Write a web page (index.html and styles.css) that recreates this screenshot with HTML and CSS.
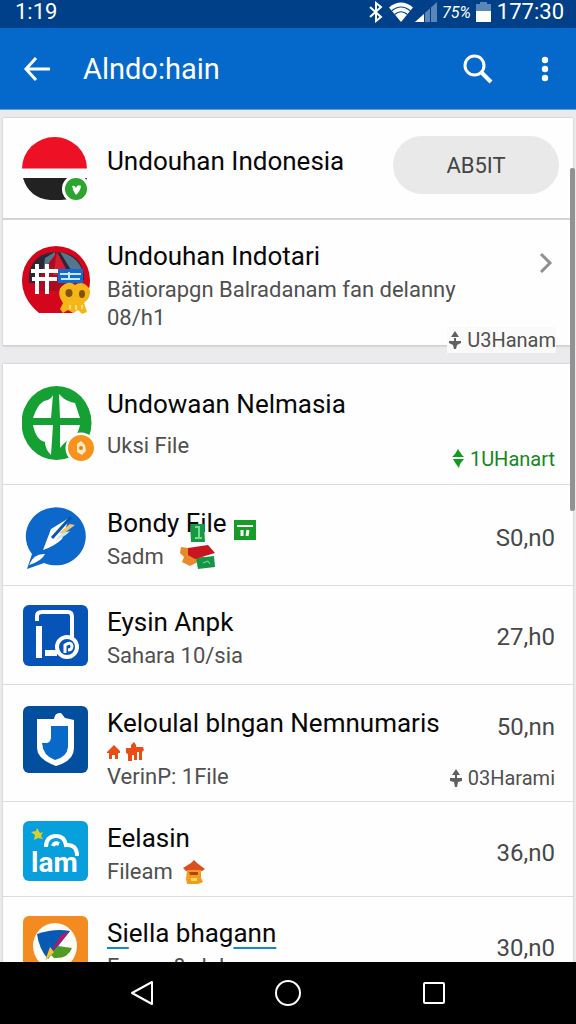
FILE: index.html
```html
<!doctype html>
<html lang="id">
<head>
<meta charset="utf-8">
<meta name="viewport" content="width=device-width, initial-scale=1">
<title>Alndo:hain</title>
<link rel="stylesheet" href="styles.css">
</head>
<body>
    <div class="status-bar">
        <span class="clock">1:19</span>
        <div class="status-icons">
            <svg width="14" height="22" viewBox="0 0 14 22"><path d="M1 6l11 10-5 4V2l5 4L1 16" fill="none" stroke="#fff" stroke-width="2"/></svg>
            <svg class="wifi" width="24" height="20" viewBox="0 0 24 20"><path d="M0 5.500Q12-4.500 24 5.500L12 20z" fill="#fff"/><path d="M2.500 9Q12 1 21.500 9M5.500 12.500Q12 7 18.500 12.500" fill="none" stroke="#004088" stroke-width="1.200"/></svg>
            <svg width="22" height="20" viewBox="0 0 22 20"><path d="M0 20L22 0v20z" fill="#5b86b8"/><path d="M0 20L9 12v8z" fill="#fff"/><path d="M9.500 8v12M15.500 4v16" stroke="#004088"/></svg>
            <span class="percent">75%</span>
            <svg class="battery" width="15" height="20" viewBox="0 0 15 20"><path d="M4 0h7v2h4v7H0V2h4z" fill="#5b86b8"/><path d="M0 9h15v11H0z" fill="#fff"/></svg>
            <span class="clock">177:30</span>
        </div>
    </div>

    <header class="app-bar">
        <button type="button" class="icon-button" aria-label="Kembali">
            <svg width="28" height="26" viewBox="0 0 28 26"><path d="M13 2L3 13l10 11M3 13h24" fill="none" stroke="#fff" stroke-width="3"/></svg>
        </button>
        <h1>Alndo:hain</h1>
        <button type="button" class="icon-button search" aria-label="Cari">
            <svg width="30" height="30" viewBox="0 0 30 30"><circle cx="11.500" cy="11.500" r="9.500" fill="none" stroke="#fff" stroke-width="3"/><path d="M18 18l10 10" stroke="#fff" stroke-width="4"/></svg>
        </button>
        <button type="button" class="icon-button" aria-label="Menu">
            <svg width="8" height="26" viewBox="0 0 8 26" fill="#fff"><circle cx="4" cy="4" r="3.200"/><circle cx="4" cy="13" r="3.200"/><circle cx="4" cy="22" r="3.200"/></svg>
        </button>
    </header>

    <main>
        <ul class="card">
            <li class="row row-lead">
                <svg class="icon" width="68" height="66" viewBox="0 0 68 66">
                    <path d="M0 32.500a32.500 31.500 0 0 1 65 0z" fill="#ee1024"/>
                    <path d="M1 42h64q-5 21-26 22H28Q7 62 1 42z" fill="#222"/>
                    <circle cx="54" cy="53" r="14" fill="#fff"/><circle cx="54" cy="53" r="11" fill="#2ba52b"/>
                    <path d="M50 50q3-1 4 2 1-4 5-2-1 6-5 9-3-4-4-9z" fill="#fff"/>
                </svg>
                <div class="text"><h2>Undouhan Indonesia</h2></div>
                <button type="button" class="pill">AB5IT</button>
            </li>
            <li class="row row-detail">
                <svg class="icon" width="68" height="70" viewBox="0 0 68 70">
                    <path d="M17 68Q0 54 0 35a34 34 0 0 1 68 0q0 20-17 33z" fill="#d3061b"/>
                    <path d="M7 38Q5 9 34 7q28 1 28 28L47 40z" fill="#2d2735"/>
                    <path d="M23 13l10-6 1 12-13 9zM38 7q18 4 23 20l-12-2z" fill="#53788d"/>
                    <path d="M35 7L18 30v16h38L40 16z" fill="#a90d22"/><path d="M35 7l-4 23h16z" fill="#d51c31"/>
                    <path d="M9 26h27M10 34h25M15 19v30M25 19v30" stroke="#fff" stroke-width="4"/>
                    <path d="M36 24h25v14H36z" fill="#126ad0"/><path d="M38 29h21M39 34h19M47 27v8" stroke="#c9e6ff" stroke-width="2"/>
                    <path d="M38 53q-3-10 5-14 6-3 10 1 6-4 11 0 7 5 2 14l-4 4 3 9-5 2-4-4-5 3-5-3-5 3-3-4 3-6z" fill="#f6b619"/>
                    <ellipse cx="47" cy="48" rx="3.500" ry="4" fill="#84510a"/><ellipse cx="60" cy="49" rx="3" ry="4" fill="#84510a"/>
                    <path d="M48 60v4M54 60v5M60 60v4" stroke="#ffe278" stroke-width="2"/>
                </svg>
                <div class="text">
                    <h2>Undouhan Indotari</h2>
                    <p>Bätiorapgn Balradanam fan delanny<br>08/h1</p>
                </div>
                <a href="#" class="more" aria-label="Buka"><svg width="14" height="22" viewBox="0 0 14 22"><path d="M2 2l9 9-9 9" fill="none" stroke="#909090" stroke-width="3"/></svg></a>
                <span class="meta meta-edge"><svg width="12" height="20" viewBox="0 0 12 20"><path d="M6 1l4 6H2zM5 8h2v3h5v2l-4 2-1 4H5l-1-4-4-2v-2h5z"/></svg>U3Hanam</span>
            </li>
        </ul>

        <ul class="card">
            <li class="row row-spaced">
                <svg class="icon" width="72" height="76" viewBox="0 0 72 76">
                    <ellipse cx="34.500" cy="37" rx="35" ry="37" fill="#15a033"/>
                    <path d="M11 32q4-13 11-17 7-1 9-6l-2 23zM37 8q7 8 16 9l5 15H38zM11 39h20l-2 30q-6-6-6-13-9-2-12-17zM38 39h20q-2 10-8 14-6 1-12 9z" fill="#fff"/>
                    <circle cx="59" cy="62" r="15.500" fill="#fff"/><circle cx="59" cy="62" r="13" fill="#f7931d"/>
                    <path d="M55 58l4-3 4 4 1 6-4 4-5-3z" fill="#ffe8bd"/><circle cx="59" cy="62" r="2" fill="#d2852a"/>
                </svg>
                <div class="text"><h2>Undowaan Nelmasia</h2><p>Uksi File</p></div>
                <span class="meta meta-new"><svg width="12" height="20" viewBox="0 0 12 20"><path d="M6 0l4 6 2 2H0l3-3zM1 10h11l-4 5-1 4-3-4z"/></svg>1UHanart</span>
            </li>
            <li class="row row-tall">
                <svg class="icon" width="66" height="64" viewBox="0 0 66 64">
                    <path d="M5 64l5-15a30 29 0 1 1 12 9z" fill="#0d68cc"/>
                    <path d="M47 13L29 24 21 45q12-4 19-11zM7 60q5-12 16-11-3 7-16 11z" fill="#fff"/>
                    <path d="M49 12L30 33" stroke="#0d55ad" stroke-width="3"/><path d="M53 20l-12 9-4-1 11-9z" fill="#f6c36b"/><path d="M34 35q4-8 14-9-5 6-14 9z" fill="#c9e7f8"/>
                </svg>
                <div class="text">
                    <h2>Bondy <span class="chip"><span>F</span><svg width="15" height="20" viewBox="0 0 15 20"><path d="M0 2h14l1 18H1z" fill="#159a43"/><path d="M5 5h4v10M5 16h7" fill="none" stroke="#72dc91" stroke-width="2"/></svg></span>ile<svg class="badge" width="22" height="20" viewBox="0 0 22 20"><path d="M0 0h22v20H0z" fill="#189c28"/><path d="M3 6h16" stroke="#fff" stroke-width="2"/><path d="M8 10v6M14 10l-1 6" fill="none" stroke="#fff" stroke-width="3"/></svg></h2>
                    <p>Sadm<svg class="ticket" width="36" height="24" viewBox="0 0 36 24"><path d="M1 2l7 1 18 10-16 8-8-4 2-5-4-4z" fill="#e8892b"/><path d="M16 13l18-2 1 11-17 2z" fill="#159546"/><path d="M8 3l20-3 7 8-20 6-7-4z" fill="#c8151e"/><path d="M23 18l5-2 2 3" stroke="#83dda6" fill="none"/></svg></p>
                </div>
                <span class="price">S0,n0</span>
            </li>
            <li class="row">
                <svg class="icon" width="66" height="62" viewBox="0 0 66 62">
                    <rect x="1" y="1" width="65" height="61" rx="6" fill="#0754b8"/>
                    <path d="M15 17v-5q0-4 5-4h26q4 0 4 5v22" fill="none" stroke="#fff" stroke-width="4"/>
                    <path d="M17 22v32M23 49h12" stroke="#fff" stroke-width="6"/>
                    <circle cx="45" cy="43" r="10" fill="#0754b8" stroke="#fff" stroke-width="4"/>
                    <path d="M43 49v-8q6-4 7 1 0 4-4 4" fill="none" stroke="#fff" stroke-width="3"/>
                </svg>
                <div class="text"><h2>Eysin Anpk</h2><p>Sahara 10/sia</p></div>
                <span class="price">27,h0</span>
            </li>
            <li class="row row-stats">
                <svg class="icon" width="66" height="68" viewBox="0 0 66 68">
                    <rect x="1" y="1" width="65" height="67" rx="6" fill="#034f9f"/>
                    <path d="M15 14h17q1-7 7-6l4 5 9 2v28q0 13-18 18-19-7-19-18z" fill="#fff"/>
                    <path d="M29 21h17v21q-1 10-13 13-12-4-13-17h5q4-1 4-6z" fill="#0869c8"/>
                </svg>
                <div class="text">
                    <h2>Keloulal blngan Nemnumaris</h2>
                    <svg class="houses" width="38" height="20" viewBox="0 0 38 20"><path d="M0 11l7-7 6 6v2h-2v6H8v-4H5v4H2v-6H0zM19 7h5V4l3-3 2 3v2h7l1 3-2 2v8h-3v-8h-2v8h-3v-5h-2v6h-4v-7l-2-1z" fill="#ed4b16"/></svg>
                    <p>VerinP: 1File</p>
                </div>
                <div class="side"><span class="price">50,nn</span><span class="meta"><svg width="12" height="20" viewBox="0 0 12 20"><path d="M6 1l4 6H2zM5 7h2v3h5v3l-4 1-1 5H5l-1-5-4-1v-3h5z"/></svg>03Harami</span></div>
            </li>
            <li class="row row-short">
                <svg class="icon" width="66" height="62" viewBox="0 0 66 62">
                    <rect x="1" y="1" width="65" height="60" rx="6" fill="#079fdc"/>
                    <path d="M15 8l3 5 3-1-2 4 2 3-5-1-4 2 1-5-4-3 5-1z" fill="#d6d22c"/>
                    <path d="M24 27q0-10 9-11 9-1 11 9 11-1 11 11M31 26q1-4 6-2" fill="none" stroke="#fff" stroke-width="4"/>
                    <text x="9" y="52" class="logo-text">lam</text>
                </svg>
                <div class="text"><h2>Eelasin</h2><p>Fileam<svg class="hut" width="22" height="24" viewBox="0 0 22 24"><path d="M0 8l8-5 3-3 3 3 8 6-3 2H3z" fill="#dc4d20"/><path d="M4 10h14v8l2 4-5 2H4l-1-5z" fill="#f29b1e"/><path d="M6 12h9v3H7z" fill="#ad4610"/><path d="M8 18h6v3H8z" fill="#ffdb52"/></svg></p></div>
                <span class="price">36,n0</span>
            </li>
            <li class="row row-short">
                <svg class="icon" width="66" height="66" viewBox="0 0 66 66">
                    <rect x="1" y="1" width="65" height="65" rx="6" fill="#f48b20"/>
                    <ellipse cx="33" cy="31" rx="22" ry="23" fill="#fffdf5"/>
                    <path d="M15 19q18-6 33-3L26 44Q17 34 15 19z" fill="#075ab4"/><path d="M48 16L26 42l13-22z" fill="#b51a64"/><path d="M29 40l7-9 14 2q-4 11-18 10z" fill="#4d9d25"/><path d="M23 46l5-14 4 5z" fill="#f3c632"/>
                </svg>
                <div class="text"><h2><u>Si</u>ella bhag<u>ann</u></h2><p>Fmwm? . lnl</p></div>
                <span class="price">30,n0</span>
            </li>
        </ul>
        <div class="scroll-thumb"></div>
    </main>

    <nav class="nav-bar">
        <button type="button" aria-label="Kembali"><svg width="24" height="26" viewBox="0 0 24 26"><path d="M22 2v22L2 13z" fill="none" stroke="#fff" stroke-width="2" stroke-linejoin="round"/></svg></button>
        <button type="button" aria-label="Beranda"><svg width="26" height="26" viewBox="0 0 26 26"><circle cx="13" cy="13" r="12" fill="none" stroke="#fff" stroke-width="2"/></svg></button>
        <button type="button" aria-label="Terbaru"><svg width="22" height="22" viewBox="0 0 22 22"><rect x="1" y="1" width="20" height="20" rx="1" fill="none" stroke="#fff" stroke-width="2"/></svg></button>
    </nav>
</body>
</html>
```
FILE: styles.css
```css
* {
    box-sizing: border-box;
}
body {
    margin: 0;
    height: 100vh;
    display: flex;
    flex-direction: column;
    overflow: hidden;
    background: #ebebed;
    color: #080808;
    font-family: Roboto, sans-serif;
}
h1, h2, p, ul {
    margin: 0;
    padding: 0;
    font-weight: normal;
}
button {
    border: none;
    padding: 0;
    background: none;
    font-family: inherit;
}
svg {
    flex: none;
}

/* top bars */
.status-bar {
    flex: none;
    display: flex;
    justify-content: space-between;
    height: 28px;
    padding: 0 12px 4px 15px;
    background: #004088;
    color: #fff;
}
.status-icons {
    display: flex;
    align-items: center;
    gap: 2px;
}
.clock {
    font-size: 22px;
    line-height: 24px;
}
.wifi {
    margin-left: 4px;
}
.percent {
    margin: 0 3px;
    font-size: 16px;
    font-style: italic;
}
.battery {
    margin-right: 4px;
}
.app-bar {
    flex: none;
    display: flex;
    align-items: center;
    height: 82px;
    padding: 0 27px 0 23px;
    border-bottom: 1px solid #6f9dd0;
    background: #0469ca;
    color: #fff;
}
.app-bar h1 {
    flex: 1;
    padding-left: 32px;
    font-size: 29px;
    line-height: 36px;
}
.icon-button {
    display: flex;
}
.search {
    margin-right: 48px;
}

/* list */
main {
    position: relative;
    flex: 1;
    min-height: 0;
    padding: 8px 3px 0;
    overflow: hidden;
}
.card {
    margin-bottom: 18px;
    border-bottom: 1px solid #cfcfcf;
    background: #fefefe;
    box-shadow: 0 0 2px #bbb;
    list-style: none;
}
.row {
    position: relative;
    display: grid;
    grid-template-columns: 68px 1fr auto;
    column-gap: 17px;
    align-items: start;
    padding: 18px 18px 14px 19px;
    border-bottom: 1px solid #dddddf;
}
.row:last-child {
    border-bottom: none;
}
h2 {
    font-size: 26px;
    line-height: 36px;
    white-space: nowrap;
}
p {
    font-size: 22px;
    line-height: 28px;
    color: #505050;
    white-space: nowrap;
}
.text {
    min-width: 0;
}
.text p {
    margin-top: 2px;
}
.price {
    align-self: center;
    font-size: 24px;
    line-height: 28px;
    color: #484848;
}
.row-lead {
    padding: 18px 14px 16px 19px;
    border-bottom: 2px solid #d3d3d3;
}
.row-lead h2 {
    padding-top: 7px;
}
.pill {
    width: 166px;
    height: 58px;
    border-radius: 29px;
    background: #e9e9e9;
    color: #444;
    font-size: 22px;
}
.row-detail {
    padding-bottom: 13px;
}
.row-detail .icon {
    margin-top: 7px;
}
.more {
    margin-top: 14px;
    margin-right: 2px;
}
.row-spaced {
    padding: 22px 18px 12px 19px;
}
.row-spaced .text p {
    margin-top: 10px;
    padding-bottom: 12px;
}
.row-tall {
    padding-top: 20px;
}
.row-stats {
    padding: 20px 18px 10px 19px;
}
.row-short {
    padding-bottom: 10px;
}
.side {
    align-self: stretch;
    display: flex;
    flex-direction: column;
    justify-content: space-between;
    align-items: flex-end;
    padding-top: 8px;
}
.side .price {
    align-self: flex-end;
}
.meta {
    display: flex;
    align-items: center;
    gap: 6px;
    font-size: 20px;
    line-height: 26px;
    color: #505050;
}
.meta svg {
    fill: #606060;
}
.meta-new {
    align-self: end;
    color: #14871c;
}
.meta-new svg {
    fill: #109a20;
}
/* sits over the lower edge of the card */
.meta-edge {
    position: absolute;
    right: 17px;
    bottom: -8px;
    padding-left: 2px;
    background: #fafafa;
}

/* small pictures in the text */
.chip {
    position: relative;
}
.chip span {
    position: relative;
    z-index: 1;
}
.chip svg {
    position: absolute;
    left: 4px;
    bottom: -4px;
}
.badge {
    margin: -10px 0 0 7px;
    vertical-align: -8px;
}
.ticket {
    margin: -4px 0 0 16px;
    vertical-align: -5px;
}
.hut {
    margin-left: 10px;
    vertical-align: -5px;
}
.houses {
    display: block;
}
.logo-text {
    fill: #fff;
    font: bold 28px Roboto, sans-serif;
}
u {
    text-decoration: underline #1688c8 2px;
    text-underline-offset: 5px;
}
.scroll-thumb {
    position: absolute;
    top: 58px;
    right: 1px;
    width: 5px;
    height: 343px;
    border-radius: 2px;
    background: #929292;
}

/* system buttons */
.nav-bar {
    flex: none;
    display: flex;
    justify-content: center;
    height: 62px;
    background: #000;
}
.nav-bar button {
    display: flex;
    width: 146px;
    align-items: center;
    justify-content: center;
}
```
